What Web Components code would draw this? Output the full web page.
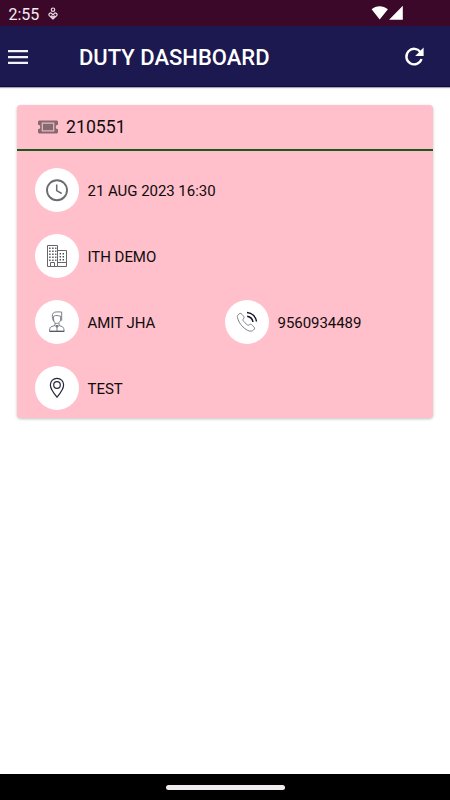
<!DOCTYPE html>
<html lang="en">
<head>
<meta charset="utf-8">
<title>Duty Dashboard</title>
<style>
html,body{margin:0;height:100%;background:#fff}
body{font-family:Roboto,"Liberation Sans",sans-serif;overflow:hidden}
</style>
</head>
<body>
<duty-screen></duty-screen>
<script>
const define = (name, html) => customElements.define(name, class extends HTMLElement {
  constructor() {
    super();
    this.attachShadow({ mode: 'open' }).innerHTML = html;
  }
});

const icons = {
  clock: `<g fill="none" stroke="#6c6b70"><circle cx="22" cy="22.2" r="10" stroke-width="1.9"/><path d="M21.7 16.5V22.6L26.7 25.5" stroke-width="1.5"/></g>`,
  building: `<g fill="none" stroke="#66666a" stroke-width="1"><path d="M12.5 32.5V11.5H22.5V32.5ZM22.5 16.5H31.5V32.5H22.5M22.5 28.5H31.5M15.5 32.5V28.5H19.5V32.5"/><path stroke="#46464b" stroke-width="1.5" stroke-dasharray="1.4 1.6" d="M14.2 14.2H21.4M14.2 17.2H21.4M14.2 20.2H21.4M14.2 23.2H21.4M14.2 26.2H21.4M24.6 19.8H30M24.6 22.8H30M24.6 25.8H30"/></g>`,
  person: `<g fill="none" stroke="#70727a" stroke-width=".9"><path d="M18.6 21.2C16.8 18 17 14.5 18.3 13C20 11.4 23 12 26.7 12V20.7"/><path d="M18.3 16.5C21 14.6 23.2 15.9 25.6 16.2V20C25 23.5 20 25 18.8 21Z"/><path d="M20 23V25.4L15.7 27C14.8 27.7 14.6 29.5 14.6 31.4H29.1C29.1 29.3 28.6 27.6 27.7 26.9L24 25.4V23M20 25.5L22 27.7L24 25.5M22 27.5V31"/></g><path d="M20.7 25.3H23.3L22 27.5ZM14.5 30.8H29.2V31.7H14.5Z" fill="#464852"/>`,
  phone: `<path fill="none" stroke="#71737a" stroke-width=".9" d="M12.5 17.5C11.9 16 12.8 15 14.2 13.8C15.6 12.6 16.6 14 17.8 15.3C19 16.6 19.6 17.4 18.5 18.7C17.4 20 18 20.8 20 22.8C22 24.8 23.1 25.8 24.3 24.8C26 23.4 26.8 25 28.2 26.2C30 27.8 30 28.8 28.5 30C26.2 32.3 22.2 31 18 27C14.7 23.9 13.1 20.4 12.5 17.5Z"/><path fill="none" stroke="#121426" stroke-width="1.5" d="M22 12.5C27 13 30.8 16.6 31.5 21.5M22.2 16.2C25.5 16.8 27.5 18.9 28 22"/>`,
  pin: `<g fill="none" stroke="#25273a" stroke-width="1.2"><path d="M22 31.2C18.8 27.4 15.4 22.8 15.4 19C15.4 14.9 18.4 12.4 22 12.4S28.6 14.9 28.6 19C28.6 22.8 25.2 27.4 22 31.2Z"/><circle cx="22" cy="19" r="3.3"/></g>`
};

define('status-bar', `<style>
:host{display:flex;box-sizing:border-box;height:26px;background:#3c0829;color:#f4edf1;align-items:center;padding:2px 46px 0 8.5px;font-size:16px;line-height:24px}
.time{padding-top:1px}.note{margin-left:9px;margin-top:-1px}.signals{margin-left:auto;margin-top:-2px}
svg{display:block}
</style><span class="time">2:55</span>
<svg class="note" width="10" height="14" viewBox="0 0 10 14" fill="none" stroke="#e8dce4" stroke-width="1.2"><circle cx="5" cy="2.7" r="1.7"/><path d="M5 12L1.3 8.6C.1 6.9 2.3 5.2 3.7 6.5L5 7.8L6.3 6.5C7.7 5.2 9.9 6.9 8.7 8.6ZM3 8.6L5 10.3L7 8.6"/></svg>
<svg class="signals" width="33" height="16" viewBox="0 0 33 16" fill="#fff"><path d="M.6 4.2C5.3 .3 11.8 .3 16.9 4.2L8.7 14.5ZM31.8 .8V14.7H18.1Z"/></svg>`);

define('app-bar', `<style>
:host{display:flex;box-sizing:border-box;height:61px;background:#1c1850;color:#fff;align-items:center;padding:2px 24px 0 8px;border-bottom:1px solid #100b45;box-shadow:0 1px 1px #aaa5b4}
h1{margin:2px 0 0 51px;font-size:22px;line-height:28px;font-weight:500;white-space:nowrap}
svg{display:block}.reload{margin-left:auto}
</style>
<svg width="20" height="14" viewBox="0 0 20 14" fill="#f3f2f5"><path d="M0 0H20V2.3H0ZM0 5.9H20V8.2H0ZM0 11.7H20V14H0Z"/></svg>
<h1><slot></slot></h1>
<svg class="reload" width="22" height="20" viewBox="0 0 22 20"><path d="M16.6 5.3A7.75 7.75 0 1 0 17.5 12" fill="none" stroke="#fff" stroke-width="2.4"/><path d="M19.6 .6V9H11.2Z" fill="#fff"/></svg>`);

define('duty-card', `<style>
:host{display:block;box-sizing:border-box;height:313px;margin:18px 17px 0;background:#ffbfcb;border-radius:4px;box-shadow:0 1px 3px rgba(0,0,0,.25)}
header{display:flex;align-items:center;box-sizing:border-box;height:46px;padding:0 21px;border-bottom:2px solid #1b591c;gap:8px;font-size:17.7px;color:#100b0d}
svg{display:block}
.rows{display:grid;grid-template-columns:190px 1fr;row-gap:22px;padding:17px 18px 0}
::slotted(.wide){grid-column:1/-1}
</style>
<header><svg width="20" height="14" viewBox="0 0 20 14"><path fill="#856a70" d="M1 .5H19L20 1.5V4.7A2.3 2.3 0 0 0 20 9.3V12.5L19 13.5H1L0 12.5V9.3A2.3 2.3 0 0 0 0 4.7V1.5Z"/><path d="M4.3 3.2H15.7V10.8H4.3Z" fill="#856a70" stroke="#f1b6c1" stroke-width="1.2"/></svg><slot name="number"></slot></header>
<div class="rows"><slot></slot></div>`);

customElements.define('duty-detail', class extends HTMLElement {
  connectedCallback() {
    this.attachShadow({ mode: 'open' }).innerHTML = `<style>
:host{display:flex;align-items:center;height:44px;gap:8.5px;font-size:15px;letter-spacing:-.04px;color:#100b0d;white-space:nowrap}
.disc{width:44px;height:44px;border-radius:50%;background:#fff;flex:none}
svg{display:block}.label{padding-top:1.5px}
</style><span class="disc"><svg width="44" height="44" viewBox="0 0 44 44">${icons[this.getAttribute('icon')]}</svg></span><span class="label"><slot></slot></span>`;
  }
});

define('nav-bar', `<style>
:host{display:flex;height:26px;background:#000;justify-content:center;align-items:center;margin-top:auto}
i{display:block;width:119px;height:5px;border-radius:3px;background:#efebef}
</style><i></i>`);

define('duty-screen', `<style>
:host{display:flex;flex-direction:column;width:450px;height:800px;background:#fff}
</style>
<status-bar></status-bar>
<app-bar>DUTY DASHBOARD</app-bar>
<duty-card>
<span slot="number">210551</span>
<duty-detail class="wide" icon="clock">21 AUG 2023 16:30</duty-detail>
<duty-detail class="wide" icon="building">ITH DEMO</duty-detail>
<duty-detail icon="person">AMIT JHA</duty-detail>
<duty-detail icon="phone">9560934489</duty-detail>
<duty-detail class="wide" icon="pin">TEST</duty-detail>
</duty-card>
<nav-bar></nav-bar>`);
</script>
</body>
</html>
